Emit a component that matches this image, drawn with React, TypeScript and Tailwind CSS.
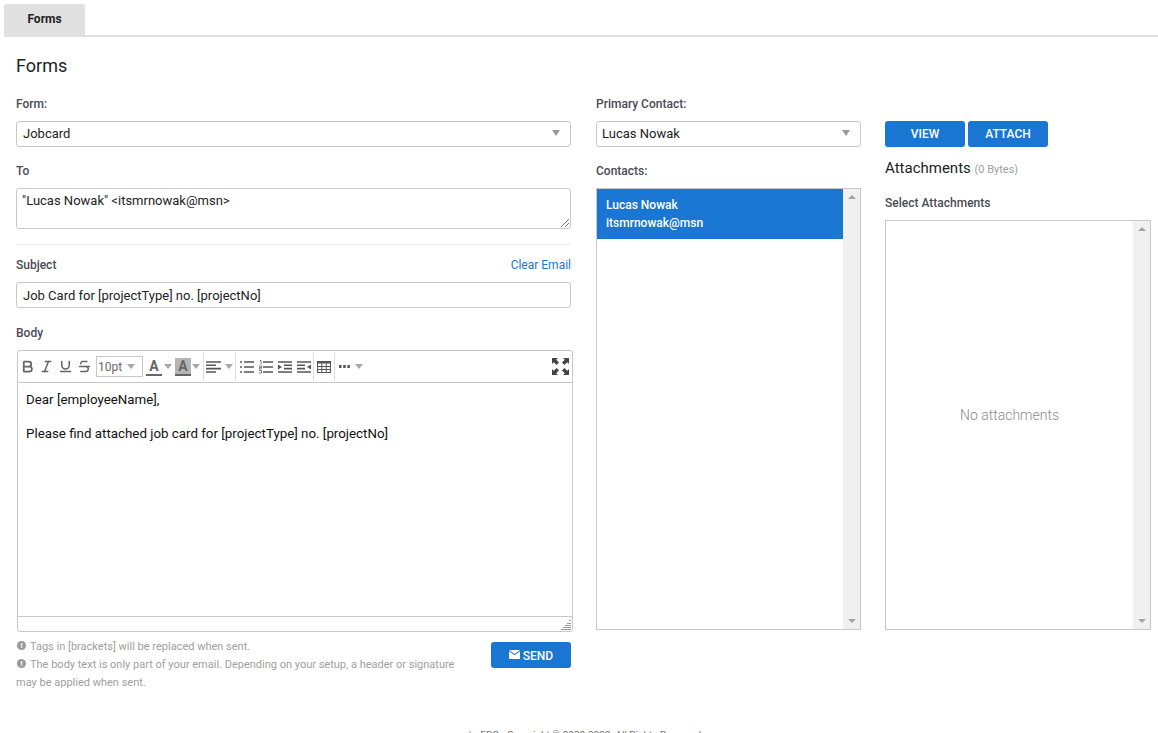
import { Bold, Italic, Underline, Strikethrough } from "lucide-react";

const labelClass = "block text-[12px] leading-[14px] font-medium text-[#4a4a55]";
const fieldClass = "rounded-[3px] border border-[#c8c8c8] bg-white text-[13px] text-[#222]";
const buttonClass = "h-[26px] w-[80px] rounded-[3px] bg-[#1976d2] text-[12px] font-medium text-white";

function Caret({ className = "" }: { className?: string }) {
  return (
    <span
      className={`inline-block h-0 w-0 border-x-[4px] border-t-[5px] border-x-transparent border-t-[#a8a8a8] ${className}`}
    />
  );
}

function SelectBox({ value, className = "pl-[6px]" }: { value: string; className?: string }) {
  return (
    <div className={`${fieldClass} flex h-[26px] items-center justify-between pr-[10px] ${className}`}>
      <span>{value}</span>
      <span className="mb-[3px] h-0 w-0 border-x-[4px] border-t-[6px] border-x-transparent border-t-[#999]" />
    </div>
  );
}

function ScrollTrack() {
  return (
    <div className="flex w-[17px] shrink-0 flex-col items-center justify-between bg-[#f0f0f0] py-[6px]">
      <span className="h-0 w-0 border-x-[4px] border-b-[4px] border-x-transparent border-b-[#a3a3a3]" />
      <span className="h-0 w-0 border-x-[4px] border-t-[4px] border-x-transparent border-t-[#a3a3a3]" />
    </div>
  );
}

function Toolbar() {
  return (
    <div className="flex h-[32px] items-center border-b border-[#c8c8c8] pl-[2px] pr-[3px] text-[#666]">
      <div className="flex items-center gap-[4px]">
        <Bold size={15} strokeWidth={2.800} />
        <Italic size={15} strokeWidth={2.500} />
        <Underline size={15} strokeWidth={2.500} />
        <Strikethrough size={15} strokeWidth={2.200} />
      </div>
      <div className="ml-[4px] flex h-[21px] w-[47px] items-center justify-between border border-[#c8c8c8] pl-[1px] pr-[7px] text-[12px] text-[#666]">
        10pt
        <Caret />
      </div>
      <span className="ml-[3px] flex h-[18px] w-[16px] justify-center border-b-2 border-[#666] text-[14px] leading-[16px] font-bold text-[#666]">
        A
      </span>
      <Caret className="ml-[2px]" />
      <span className="ml-[3px] flex h-[18px] w-[16px] justify-center border-b-2 border-[#666] bg-[#b5b5b5] text-[14px] leading-[16px] font-bold text-[#666]">
        A
      </span>
      <Caret className="ml-[1px]" />
      <div className="ml-[3px] flex h-[28px] items-center border-l border-[#ddd] pl-[2px]">
        <svg width="15" height="12" viewBox="0 0 15 12">
          <path d="M0 1h15M0 4.300h10M0 7.600h15M0 11h10" stroke="#555" strokeWidth="1.600" />
        </svg>
        <Caret className="ml-[4px]" />
      </div>
      <div className="ml-[2px] flex h-[28px] items-center gap-[5px] border-l border-[#ddd] pl-[4px]">
        <svg width="14" height="12" viewBox="0 0 14 12">
          <path d="M4 1h10M4 6h10M4 11h10M0 1h2M0 6h2M0 11h2" stroke="#555" strokeWidth="1.600" />
        </svg>
        <svg width="14" height="14" viewBox="0 0 14 14">
          <path d="M4 2h10M4 7h10M4 12h10" stroke="#555" strokeWidth="1.600" />
          <path d="M1 .5h1v4M0 6h2.500v1.500H0.500V9h2.500M0 10.500h2.500V13H0" fill="none" stroke="#555" strokeWidth=".8" />
        </svg>
        <svg width="14" height="12" viewBox="0 0 14 12">
          <path d="M0 1h14M6 4.300h8M6 7.600h8M0 11h14" stroke="#555" strokeWidth="1.600" />
          <path d="M0 3.500l4 2.500-4 2.500z" fill="#555" />
        </svg>
        <svg width="14" height="12" viewBox="0 0 14 12">
          <path d="M0 1h14M0 4.300h8M0 7.600h8M0 11h14" stroke="#555" strokeWidth="1.600" />
          <path d="M14 3.500L10 6l4 2.500z" fill="#555" />
        </svg>
      </div>
      <div className="ml-[2px] flex h-[28px] items-center border-l border-[#ddd] pl-[3px]">
        <svg width="14" height="12" viewBox="0 0 14 12">
          <rect x=".5" y=".5" width="13" height="11" fill="none" stroke="#555" />
          <path d="M0 1.500h14" stroke="#555" strokeWidth="2" />
          <path d="M0 5.500h14M0 8.500h14M4.800 1v10M9.300 1v10" stroke="#555" />
        </svg>
      </div>
      <div className="ml-[3px] flex h-[28px] items-center gap-[5px] border-l border-[#ddd] pl-[4px]">
        <svg width="11" height="3" viewBox="0 0 11 3">
          <path d="M0 0h2.500v3H0zM4.200 0h2.500v3H4.200zM8.400 0h2.500v3H8.400z" fill="#555" />
        </svg>
        <Caret />
      </div>
      <svg width="17" height="17" viewBox="0 0 17 17" className="ml-auto">
        <path
          d="M0 0h6L4.200 1.800 7 4.600 4.600 7 1.800 4.200 0 6zM17 0v6l-1.800-1.800L12.400 7 10 4.600l2.800-2.800L11 0zM0 17v-6l1.800 1.800L4.600 10 7 12.400l-2.800 2.800L6 17zM17 17h-6l1.800-1.800L10 12.400l2.400-2.400 2.800 2.800L17 11z"
          fill="#444"
        />
      </svg>
    </div>
  );
}

function NoteIcon() {
  return (
    <span className="mr-[4px] ml-[1px] inline-block h-[9px] w-[9px] rounded-full bg-[#999] text-center align-[2px] text-[8px] leading-[9px] font-bold text-white">
      !
    </span>
  );
}

export default function App() {
  return (
    <div className="h-[733px] overflow-hidden bg-white font-['Roboto',sans-serif]">
      {/* tab strip */}
      <div className="ml-[4px] border-b-2 border-[#e0e0e0] pt-[4px]">
        <div className="flex h-[31px] w-[81px] items-center justify-center rounded-t-[2px] bg-[#e0e0e0] pb-[2px] text-[12px] font-bold text-[#222]">
          Forms
        </div>
      </div>

      <h1 className="mt-[17px] ml-[16px] text-[18px] leading-[24px] font-normal text-[#222]">Forms</h1>

      <div className="mt-[19px] flex pl-[16px]">
        {/* left column */}
        <div className="w-[557px]">
          <div className="w-[555px]">
            <label className={labelClass}>Form:</label>
            <div className="mt-[10px]">
              <SelectBox value="Jobcard" />
            </div>
            <label className={`${labelClass} mt-[17px]`}>To</label>
            <div className={`${fieldClass} relative mt-[10px] h-[41px] px-[5px] py-[3px] leading-[18px]`}>
              "Lucas Nowak" &lt;itsmrnowak@msn&gt;
              <svg width="9" height="9" viewBox="0 0 9 9" className="absolute right-[1px] bottom-[1px]">
                <path d="M1 9l8-8M5 9l4-4" stroke="#555" strokeWidth=".8" />
              </svg>
            </div>
            <div className="mt-[15px] border-t border-[#eee]" />
            <div className="mt-[13px] flex items-center justify-between">
              <label className={labelClass}>Subject</label>
              <a className="text-[12px] leading-[14px] text-[#1976d2]">Clear Email</a>
            </div>
            <div className={`${fieldClass} mt-[10px] flex h-[26px] items-center px-[6px] pt-[1px]`}>
              Job Card for [projectType] no. [projectNo]
            </div>
            <label className={`${labelClass} mt-[18px]`}>Body</label>
          </div>

          <div className="mt-[10px] ml-[1px] flex h-[282px] w-[556px] flex-col rounded-[3px] border border-[#c8c8c8]">
            <Toolbar />
            <div className="flex-1 px-[8px] py-[8px] text-[13.330px] leading-[17px] text-[#111]">
              <p>Dear [employeeName],</p>
              <p className="mt-[17px]">Please find attached job card for [projectType] no. [projectNo]</p>
            </div>
            <div className="relative h-[15px] border-t border-[#c8c8c8]">
              <svg width="10" height="10" viewBox="0 0 10 10" className="absolute right-[1px] bottom-[1px]">
                <path d="M8 0h2v1H8zM6 3h4v1H6zM4 5h6v1H4zM2 7h8v1H2zM0 9h10v1H0z" fill="#999" />
              </svg>
            </div>
          </div>

          <div className="mt-[6px] flex w-[555px] items-start justify-between">
            <div className="w-[445px] text-[11px] leading-[18px] text-[#a0a0a0]">
              <p>
                <NoteIcon />
                Tags in [brackets] will be replaced when sent.
              </p>
              <p>
                <NoteIcon />
                The body text is only part of your email. Depending on your setup, a header or signature may be applied
                when sent.
              </p>
            </div>
            <button className={`${buttonClass} mt-[4px] flex items-center justify-center gap-[3px] pt-[1px]`}>
              <svg width="11" height="9" viewBox="0 0 11 9" className="mb-[3px]">
                <path d="M0 0h11L5.500 4zM0 1.200L5.500 5.200 11 1.200V9H0z" fill="white" />
              </svg>
              SEND
            </button>
          </div>
        </div>

        {/* contacts column */}
        <div className="ml-[23px] w-[265px]">
          <label className={labelClass}>Primary Contact:</label>
          <div className="mt-[10px]">
            <SelectBox value="Lucas Nowak" className="pl-[5px]" />
          </div>
          <label className={`${labelClass} mt-[17px]`}>Contacts:</label>
          <div className="mt-[10px] flex h-[442px] border border-[#c8c8c8]">
            <div className="flex-1">
              <div className="h-[50px] bg-[#1976d2] px-[9px] py-[7px] text-[12px] leading-[18px] font-medium text-white">
                <p>Lucas Nowak</p>
                <p>itsmrnowak@msn</p>
              </div>
            </div>
            <ScrollTrack />
          </div>
        </div>

        {/* attachments column */}
        <div className="ml-[24px] w-[266px] pt-[24px]">
          <div className="flex gap-[3px]">
            <button className={buttonClass}>VIEW</button>
            <button className={buttonClass}>ATTACH</button>
          </div>
          <p className="mt-[12px] text-[15px] leading-[18px] text-[#222]">
            Attachments <span className="text-[11px] text-[#a0a0a0]">(0 Bytes)</span>
          </p>
          <label className={`${labelClass} mt-[17px]`}>Select Attachments</label>
          <div className="mt-[10px] flex h-[410px] border border-[#c8c8c8]">
            <div className="flex flex-1 items-center justify-center pb-[20px] text-[14px] font-light text-[#8c8c8c]">
              No attachments
            </div>
            <ScrollTrack />
          </div>
        </div>
      </div>

      <p className="mt-[37px] pl-[12px] text-center text-[10px] leading-[14px] text-[#777]">
        <span className="mr-[9px]">|</span>EBO<span className="ml-[8px]">Copyright © 2020-2023. All Rights Reserved</span>
      </p>
    </div>
  );
}
